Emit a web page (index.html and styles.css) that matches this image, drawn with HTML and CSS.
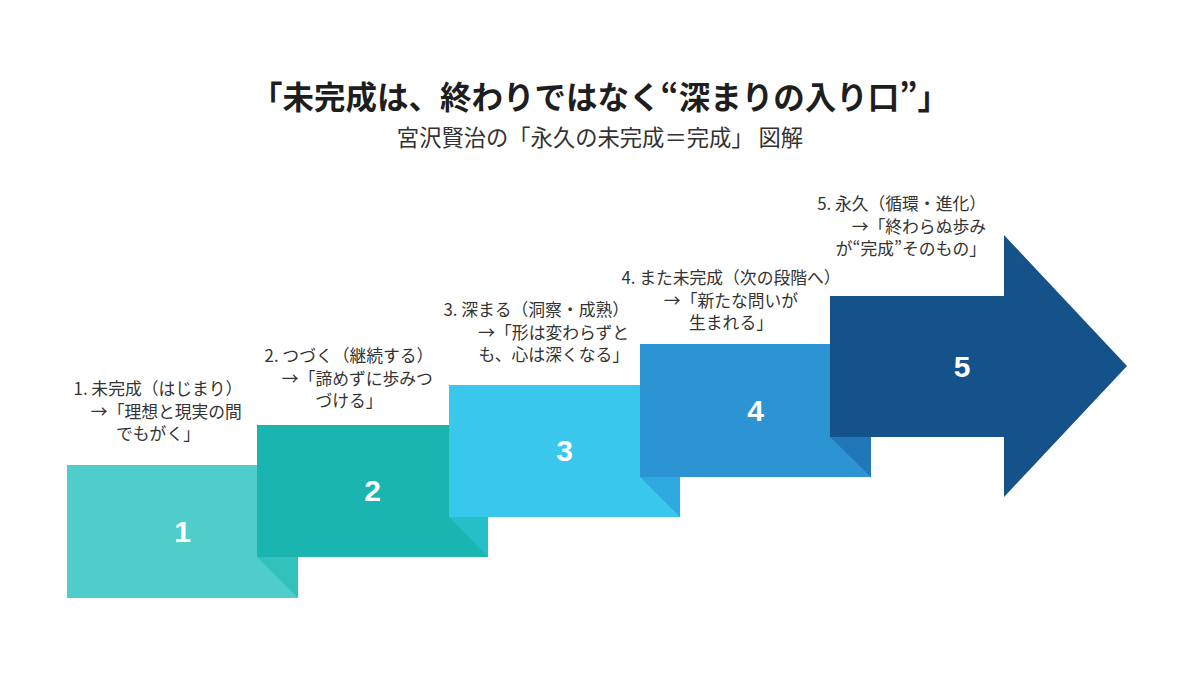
FILE: index.html
```html
<!DOCTYPE html>
<html lang="ja">
<head>
<meta charset="utf-8">
<title>未完成は、終わりではなく深まりの入り口</title>
<link rel="stylesheet" href="styles.css">
</head>
<body>
<div class="page">
  <header class="head">
    <h1 class="title">「未完成は、終わりではなく“深まりの入り口”」</h1>
    <p class="subtitle">宮沢賢治の「永久の未完成＝完成」 図解</p>
  </header>
  <div class="diagram">
    <svg class="shapes" width="1200" height="524" viewBox="0 151 1200 524" xmlns="http://www.w3.org/2000/svg">
      <rect x="67" y="465" width="231" height="133" fill="#4ECDCA"/>
      <polygon points="257,557 298,557 298,598" fill="#33C1BB"/>
      <rect x="257" y="425" width="231" height="132" fill="#1BB5B1"/>
      <polygon points="449,517 488,517 488,557" fill="#24BFC9"/>
      <rect x="449" y="385" width="231" height="132" fill="#39C8EC"/>
      <polygon points="640,477 680,477 680,517" fill="#2FAAE0"/>
      <rect x="640" y="344" width="231" height="133" fill="#2D94D4"/>
      <polygon points="830,437 871,437 871,477" fill="#2277B8"/>
      <polygon points="830,296 1004,296 1004,235 1127,366 1004,497 1004,437 830,437" fill="#15528A"/>
    </svg>
    <div class="num n1">1</div>
    <div class="num n2">2</div>
    <div class="num n3">3</div>
    <div class="num n4">4</div>
    <div class="num n5">5</div>
    <div class="label l1">1. 未完成（はじまり）<br>　→「理想と現実の間<br>でもがく」</div>
    <div class="label l2">2. つづく（継続する）<br>　→「諦めずに歩みつ<br>づける」</div>
    <div class="label l3">3. 深まる（洞察・成熟）<br>→「形は変わらずと<br>も、心は深くなる」</div>
    <div class="label l4">4. また未完成（次の段階へ）<br>→「新たな問いが<br>生まれる」</div>
    <div class="label l5">5. 永久（循環・進化）<br>→「終わらぬ歩み<br>が“完成”そのもの」</div>
  </div>
</div>
</body>
</html>
```
FILE: styles.css
```css
* { box-sizing: border-box; }
html, body { margin: 0; padding: 0; background: #ffffff; }
body { font-family: "Noto Sans CJK JP", "Noto Sans", sans-serif; color: #333333; }
.page { width: 1200px; height: 675px; overflow: hidden; }
.head { padding-top: 75px; text-align: center; }
.title {
  margin: 0;
  font-size: 31.5px;
  line-height: 40px;
  font-weight: 700;
  color: #1e1e1e;
}
.subtitle {
  margin: 6px 0 0;
  font-size: 22.3px;
  line-height: 30px;
  font-weight: 400;
  color: #333333;
}
.diagram { position: relative; width: 1200px; height: 524px; }
.shapes { position: absolute; left: 0; top: 0; display: block; }
.num {
  position: absolute;
  display: flex;
  align-items: center;
  justify-content: center;
  color: #ffffff;
  font-family: "Liberation Sans", Arial, sans-serif;
  font-weight: 700;
  font-size: 30px;
  line-height: 1;
}
.n1 { left: 67px; top: 314px; width: 231px; height: 133px; }
.n2 { left: 257px; top: 274px; width: 231px; height: 132px; }
.n3 { left: 449px; top: 234px; width: 231px; height: 132px; }
.n4 { left: 640px; top: 193px; width: 231px; height: 133px; }
.n5 { left: 830px; top: 145px; width: 264px; height: 141px; }
.label {
  position: absolute;
  font-size: 16.8px;
  line-height: 22.5px;
  color: #333333;
  white-space: nowrap;
  width: 250px;
}
.l1 { left: 33px; top: 226px; text-align: center; }
.l2 { left: 224px; top: 193px; text-align: center; }
.l3 { left: 379px; top: 147px; text-align: right; }
.l4 { left: 606px; top: 115px; text-align: center; }
.l5 { left: 736px; top: 41px; text-align: right; }
```
